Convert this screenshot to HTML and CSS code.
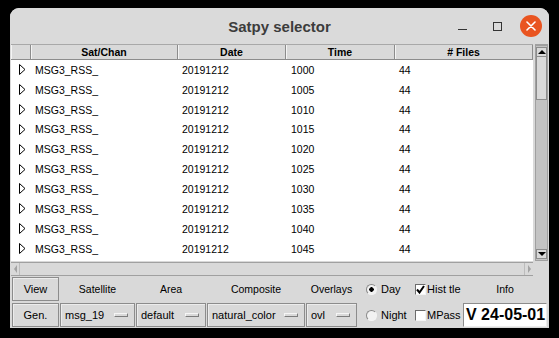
FILE: index.html
```html
<!DOCTYPE html>
<html lang="en">
<head>
  <meta charset="UTF-8">
  <title>Satpy selector</title>
  <link rel="stylesheet" href="styles.css">
</head>
<body>

<div class="window">
  <!-- Title bar -->
  <div class="titlebar">
    <span class="title">Satpy selector</span>
    <div class="wm">
      <span class="wm-min"></span>
      <span class="wm-max"></span>
      <span class="wm-close">
        <svg width="10" height="10" viewBox="0 0 10 10"><path d="M1 1L9 9M9 1L1 9" stroke="#fff" stroke-width="1.6" stroke-linecap="round"/></svg>
      </span>
    </div>
  </div>

  <!-- Tree with scrollbars -->
  <div class="browser">
    <div class="tree">
      <div class="tree-head">
        <div class="hcell"></div>
        <div class="hcell">Sat/Chan</div>
        <div class="hcell">Date</div>
        <div class="hcell">Time</div>
        <div class="hcell"># Files</div>
      </div>
      <div class="tree-body" id="rows"></div>
    </div>

    <div class="vscroll">
      <span class="sb-btn"><i class="tri-up"></i></span>
      <span class="sb-thumb"></span>
      <span class="sb-fill"></span>
      <span class="sb-btn"><i class="tri-down"></i></span>
    </div>

    <div class="hscroll">
      <span class="hb-btn"><i class="tri-left"></i></span>
      <span class="hb-fill"></span>
      <span class="hb-btn"><i class="tri-right"></i></span>
    </div>
  </div>

  <!-- Controls -->
  <div class="controls">
    <div class="btn">View</div>
    <div class="lbl">Satellite</div>
    <div class="lbl">Area</div>
    <div class="lbl">Composite</div>
    <div class="lbl">Overlays</div>
    <div class="opt"><span class="radio on"></span>Day</div>
    <div class="opt"><span class="check on"><svg width="9" height="9" viewBox="0 0 9 9"><path d="M1 4.5L3.5 7.5L8 1" fill="none" stroke="#000" stroke-width="2"/></svg></span>Hist tle</div>
    <div class="lbl">Info</div>

    <div class="btn">Gen.</div>
    <div class="combo">msg_19<span class="ind"></span></div>
    <div class="combo">default<span class="ind"></span></div>
    <div class="combo">natural_color<span class="ind"></span></div>
    <div class="combo">ovl<span class="ind"></span></div>
    <div class="opt"><span class="radio"></span>Night</div>
    <div class="opt"><span class="check"></span>MPass</div>
    <div class="entry">V 24-05-01</div>
  </div>
</div>

<script>
  // Zaman adımları için satırları üret
  const rows = document.getElementById('rows');
  for (let i = 0; i < 10; i++) {
    const time = String(1000 + i * 5);
    const row = document.createElement('div');
    row.className = 'row';
    row.innerHTML = `
      <span class="open"><svg width="7" height="11" viewBox="0 0 7 11"><path d="M0.5 0.5L6 5.5L0.5 10.5Z" fill="none" stroke="#000"/></svg></span>
      <span>MSG3_RSS_</span><span>20191212</span><span>${time}</span><span>44</span>
    `;
    rows.appendChild(row);
  }
</script>

</body>
</html>
```

FILE: styles.css
```css
/* Genel */
* {
  margin: 0;
  padding: 0;
  box-sizing: border-box;
}

body {
  background: #000;
  font-family: 'Liberation Sans', Arial, sans-serif;
  color: #000;
}

.window {
  margin: 8px 0 0 10px;
  width: 539px;
  height: 320px;
  background: #d9d9d9;
  border-radius: 9px 9px 0 0;
  overflow: hidden;
  display: flex;
  flex-direction: column;
}

/* Title bar */
.titlebar {
  height: 36px;
  display: grid;
  grid-template-columns: 1fr auto 1fr;
  align-items: center;
  background: #dadada;
}

.title {
  grid-column: 2;
  font-size: 15px;
  font-weight: bold;
  color: #3c3c3c;
}

.wm {
  grid-column: 3;
  justify-self: end;
  display: flex;
  align-items: center;
  padding-right: 7px;
}

.wm-min {
  width: 9px;
  height: 1px;
  background: #333;
  margin-top: 7px;
}

.wm-max {
  width: 9px;
  height: 9px;
  border: 1px solid #333;
  margin-left: 26px;
}

.wm-close {
  width: 22px;
  height: 22px;
  border-radius: 50%;
  background: #e95420;
  margin-left: 18px;
  display: flex;
  align-items: center;
  justify-content: center;
}

/* Tree */
.browser {
  display: grid;
  grid-template-columns: 522px 13px;
  grid-template-rows: 217px 14px;
  column-gap: 2px;
  row-gap: 1px;
  padding-left: 1px;
  height: 232px;
}

.tree {
  background: #fff;
  overflow: hidden;
}

.tree-head {
  display: grid;
  grid-template-columns: 20px 147px 108px 109px 138px;
  height: 16px;
  background: #d9d9d9;
  border-top: 1px solid #a8a8a8;
}

.hcell {
  font-size: 10.5px;
  font-weight: bold;
  text-align: center;
  line-height: 14px;
  border-right: 1px solid #8c8c8c;
  border-bottom: 1px solid #8c8c8c;
  box-shadow: inset 1px 0 #f4f4f4;
}

.row {
  display: grid;
  grid-template-columns: 20px 147px 108px 109px 138px;
  height: 19.85px;
  align-items: center;
  font-size: 10.5px;
}

.row span {
  padding-left: 4px;
}

.row span:nth-child(4) {
  padding-left: 5px;
}

.row .open {
  display: flex;
  justify-content: center;
  padding: 0 0 0 3px;
}

/* Scrollbars */
.vscroll {
  display: flex;
  flex-direction: column;
  background: #c3c3c3;
  border: 1px solid #a0a0a0;
  border-top-width: 2px;
  padding: 1px 0;
}

.sb-btn {
  height: 10px;
  background: #d9d9d9;
  border: 1px solid #8c8c8c;
  display: flex;
  align-items: center;
  justify-content: center;
}

.sb-thumb {
  height: 43px;
  background: #d9d9d9;
  border: 1px solid #8c8c8c;
  border-top: none;
}

.sb-fill {
  flex: 1;
}

.tri-up, .tri-down, .tri-left, .tri-right {
  width: 0;
  height: 0;
}

.tri-up {
  border-left: 4px solid transparent;
  border-right: 4px solid transparent;
  border-bottom: 4px solid #000;
}

.tri-down {
  border-left: 4px solid transparent;
  border-right: 4px solid transparent;
  border-top: 4px solid #000;
}

.tri-left {
  border-top: 4px solid transparent;
  border-bottom: 4px solid transparent;
  border-right: 3px solid #a3a3a3;
}

.tri-right {
  border-top: 4px solid transparent;
  border-bottom: 4px solid transparent;
  border-left: 3px solid #a3a3a3;
}

.hscroll {
  display: flex;
  background: #d9d9d9;
  border-top: 1px solid #a0a0a0;
  border-bottom: 1px solid #a0a0a0;
}

.hb-btn {
  width: 9px;
  display: flex;
  align-items: center;
  justify-content: center;
  border-right: 1px solid #bcbcbc;
}

.hb-btn:last-child {
  border-right: none;
  border-left: 1px solid #bcbcbc;
}

.hb-fill {
  flex: 1;
}

/* Controls */
.controls {
  display: grid;
  grid-template-columns: 47px 75px 70px 98px 51px 55px 48px 84px;
  grid-template-rows: 24px 24px;
  column-gap: 1px;
  row-gap: 2px;
  padding: 1px 0 0 2px;
  font-size: 10.5px;
}

.btn {
  border: 1px solid #8c8c8c;
  box-shadow: inset 1px 1px #ececec;
  display: flex;
  align-items: center;
  justify-content: center;
  font-size: 11px;
}

.lbl {
  display: flex;
  align-items: center;
  justify-content: center;
}

.combo {
  border: 1px solid #8c8c8c;
  box-shadow: inset 1px 1px #ececec;
  display: flex;
  align-items: center;
  justify-content: space-between;
  padding: 0 6px 0 4px;
  font-size: 11px;
}

.ind {
  width: 14px;
  height: 4px;
  background: #d9d9d9;
  border: 1px solid;
  border-color: #f6f6f6 #7c7c7c #7c7c7c #f6f6f6;
}

.opt {
  display: flex;
  align-items: center;
  font-size: 11px;
}

.radio {
  width: 11px;
  height: 11px;
  border-radius: 50%;
  border: 1px solid;
  border-color: #8a8a8a #f4f4f4 #f4f4f4 #8a8a8a;
  background: #f2f2f2;
  margin: 0 4px 0 8px;
}

.radio.on {
  background: radial-gradient(circle, #000 0 2px, #f2f2f2 2.5px);
}

.check {
  width: 11px;
  height: 11px;
  border: 1px solid;
  border-color: #6c6c6c #f4f4f4 #f4f4f4 #6c6c6c;
  background: #fff;
  margin: 0 1px 0 1px;
  display: flex;
  align-items: center;
  justify-content: center;
}

.entry {
  background: #fff;
  border: 1px solid;
  border-color: #8c8c8c #ececec #ececec #8c8c8c;
  font-size: 16px;
  font-weight: bold;
  display: flex;
  align-items: center;
  padding-left: 2px;
}
```
